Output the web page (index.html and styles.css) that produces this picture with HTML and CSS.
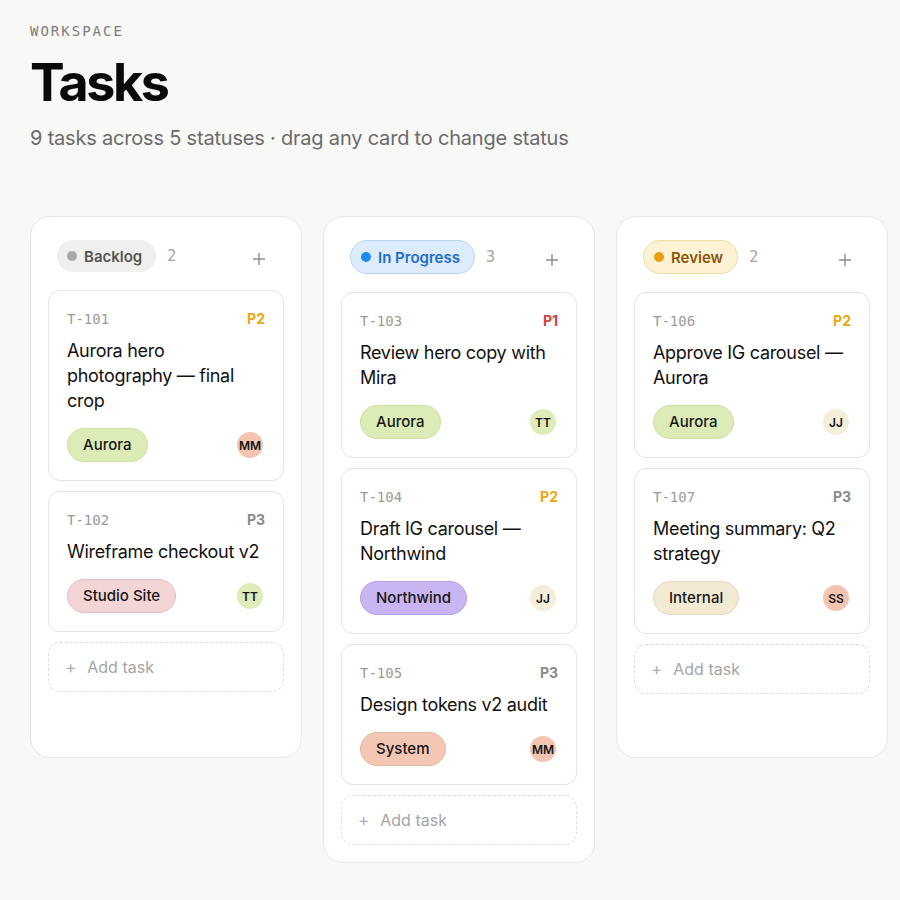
FILE: index.html
```html
<!DOCTYPE html>
<html lang="en">
<head>
  <meta charset="UTF-8">
  <meta name="viewport" content="width=device-width, initial-scale=1.0">
  <title>Tasks</title>
  <link rel="stylesheet" href="styles.css">
</head>
<body>
  <div class="page">
    <p class="eyebrow">WORKSPACE</p>
    <h1 class="title">Tasks</h1>
    <p class="subtitle">9 tasks across 5 statuses · drag any card to change status</p>

    <div class="board">
      <!-- Backlog -->
      <div class="column">
        <div class="col-head">
          <span class="status status-backlog"><span class="dot"></span>Backlog</span>
          <span class="count">2</span>
          <span class="add-icon">
            <svg width="14" height="14" viewBox="0 0 14 14"><path d="M7 1v12M1 7h12" stroke="currentColor" stroke-width="1.4" fill="none"/></svg>
          </span>
        </div>
        <div class="card">
          <div class="card-top"><span class="task-id">T-101</span><span class="prio p2">P2</span></div>
          <p class="card-title">Aurora hero photography — final crop</p>
          <div class="card-foot"><span class="tag tag-aurora">Aurora</span><span class="avatar av-salmon">MM</span></div>
        </div>
        <div class="card">
          <div class="card-top"><span class="task-id">T-102</span><span class="prio p3">P3</span></div>
          <p class="card-title">Wireframe checkout v2</p>
          <div class="card-foot"><span class="tag tag-studio">Studio Site</span><span class="avatar av-green">TT</span></div>
        </div>
        <div class="add-task"><span class="plus">+</span>Add task</div>
      </div>

      <!-- In Progress -->
      <div class="column">
        <div class="col-head">
          <span class="status status-progress"><span class="dot"></span>In Progress</span>
          <span class="count">3</span>
          <span class="add-icon">
            <svg width="14" height="14" viewBox="0 0 14 14"><path d="M7 1v12M1 7h12" stroke="currentColor" stroke-width="1.4" fill="none"/></svg>
          </span>
        </div>
        <div class="card">
          <div class="card-top"><span class="task-id">T-103</span><span class="prio p1">P1</span></div>
          <p class="card-title">Review hero copy with Mira</p>
          <div class="card-foot"><span class="tag tag-aurora">Aurora</span><span class="avatar av-green">TT</span></div>
        </div>
        <div class="card">
          <div class="card-top"><span class="task-id">T-104</span><span class="prio p2">P2</span></div>
          <p class="card-title">Draft IG carousel — Northwind</p>
          <div class="card-foot"><span class="tag tag-northwind">Northwind</span><span class="avatar av-cream">JJ</span></div>
        </div>
        <div class="card">
          <div class="card-top"><span class="task-id">T-105</span><span class="prio p3">P3</span></div>
          <p class="card-title">Design tokens v2 audit</p>
          <div class="card-foot"><span class="tag tag-system">System</span><span class="avatar av-salmon">MM</span></div>
        </div>
        <div class="add-task"><span class="plus">+</span>Add task</div>
      </div>

      <!-- Review -->
      <div class="column">
        <div class="col-head">
          <span class="status status-review"><span class="dot"></span>Review</span>
          <span class="count">2</span>
          <span class="add-icon">
            <svg width="14" height="14" viewBox="0 0 14 14"><path d="M7 1v12M1 7h12" stroke="currentColor" stroke-width="1.4" fill="none"/></svg>
          </span>
        </div>
        <div class="card">
          <div class="card-top"><span class="task-id">T-106</span><span class="prio p2">P2</span></div>
          <p class="card-title">Approve IG carousel — Aurora</p>
          <div class="card-foot"><span class="tag tag-aurora">Aurora</span><span class="avatar av-cream">JJ</span></div>
        </div>
        <div class="card">
          <div class="card-top"><span class="task-id">T-107</span><span class="prio p3">P3</span></div>
          <p class="card-title">Meeting summary: Q2 strategy</p>
          <div class="card-foot"><span class="tag tag-internal">Internal</span><span class="avatar av-salmon">SS</span></div>
        </div>
        <div class="add-task"><span class="plus">+</span>Add task</div>
      </div>
    </div>
  </div>
</body>
</html>
```

FILE: styles.css
```css
body {
  margin: 0;
  background-color: #f8f8f6;
  font-family: Inter, "Noto Sans", sans-serif;
  color: #111;
}
.page {
  padding: 23px 30px 30px;
}
.eyebrow {
  margin: 0;
  font-family: "DejaVu Sans Mono", monospace;
  font-size: 14px;
  line-height: 16px;
  letter-spacing: 2px;
  color: #7c7c7c;
}
.title {
  margin: 15px 0 0;
  font-size: 52px;
  line-height: 57px;
  font-weight: 700;
  letter-spacing: -2.4px;
  color: #0a0a0a;
}
.subtitle {
  margin: 13px 0 0;
  font-size: 20px;
  line-height: 28px;
  color: #6b6b6b;
  letter-spacing: -0.2px;
}
.board {
  display: grid;
  grid-template-columns: repeat(3, 272px);
  gap: 21px;
  align-items: start;
  margin-top: 64px;
}
.column {
  box-sizing: border-box;
  min-height: 542px;
  padding: 17px;
  background-color: #fff;
  border: 1px solid #e6e6e3;
  border-radius: 20px;
  display: flex;
  flex-direction: column;
  gap: 10px;
}
.col-head {
  display: flex;
  align-items: center;
  padding: 6px 18px 0 9px;
  margin-bottom: 8px;
}
.status {
  display: inline-flex;
  align-items: center;
  gap: 7px;
  height: 32px;
  box-sizing: border-box;
  padding: 0 14px 0 10px;
  border-radius: 100px;
  font-size: 15px;
  font-weight: 600;
}
.dot {
  width: 10px;
  height: 10px;
  border-radius: 50%;
}
.status-backlog {
  background-color: #efefed;
  color: #555;
}
.status-backlog .dot { background-color: #a8a8a8; }
.status-progress {
  height: 34px;
  background-color: #dcecfd;
  border: 1px solid #b7d5f4;
  color: #1c6dc9;
}
.status-progress .dot { background-color: #1b8cf2; }
.status-review {
  height: 34px;
  background-color: #fdf2d3;
  border: 1px solid #f2dca2;
  color: #86560a;
}
.status-review .dot { background-color: #e6a10c; }
.count {
  margin-left: 11px;
  font-family: "DejaVu Sans Mono", monospace;
  font-size: 15px;
  color: #a3a3a3;
}
.add-icon {
  margin-left: auto;
  margin-top: 5px;
  color: #8c8c8c;
  display: flex;
}
.card {
  background-color: #fff;
  border: 1px solid #e4e4e2;
  border-radius: 12px;
  padding: 19px 18px 18px;
}
.card-top {
  display: flex;
  justify-content: space-between;
  align-items: center;
  line-height: 18px;
}
.task-id {
  font-family: "DejaVu Sans Mono", monospace;
  font-size: 14px;
  color: #9a9a9a;
}
.prio {
  font-family: Inter, sans-serif;
  font-size: 14px;
  font-weight: 700;
}
.p1 { color: #d64141; }
.p2 { color: #eaa90e; }
.p3 { color: #8a8a8a; }
.card-title {
  margin: 10px 0 0;
  font-size: 18px;
  line-height: 25px;
  font-weight: 400;
  letter-spacing: -0.3px;
  color: #111;
}
.card-foot {
  display: flex;
  justify-content: space-between;
  align-items: center;
  margin-top: 15px;
}
.tag {
  display: inline-block;
  padding: 6px 15px;
  border-radius: 100px;
  font-size: 15px;
  line-height: 20px;
  font-weight: 500;
  color: #161616;
  border: 1px solid transparent;
}
.tag-aurora { background-color: #dcecb6; border-color: #cbe0a2; }
.tag-studio { background-color: #f3d5d6; border-color: #e8c0c2; }
.tag-northwind { background-color: #c8b5f2; border-color: #b7a1e8; }
.tag-system { background-color: #f3c7b3; border-color: #e8b59e; }
.tag-internal { background-color: #f3ead3; border-color: #e6dbbd; }
.avatar {
  width: 26px;
  height: 26px;
  border-radius: 50%;
  display: inline-flex;
  align-items: center;
  justify-content: center;
  font-size: 12px;
  font-weight: 600;
  color: #151515;
  margin-right: 2px;
}
.av-salmon { background-color: #f3c4b2; }
.av-green { background-color: #ddecb8; }
.av-cream { background-color: #f4eedb; }
.add-task {
  height: 50px;
  box-sizing: border-box;
  border: 1.5px dashed #dedede;
  border-radius: 12px;
  display: flex;
  align-items: center;
  padding-left: 16px;
  font-size: 16px;
  color: #a5a5a5;
}
.plus {
  font-size: 17px;
  margin-right: 11px;
  color: #b0b0b0;
}
```
